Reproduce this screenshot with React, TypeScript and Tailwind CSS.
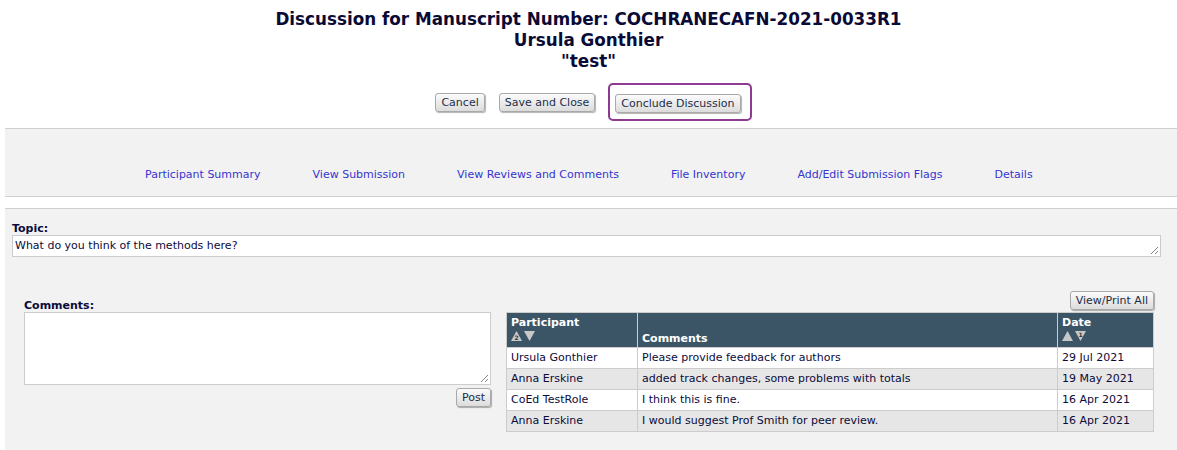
const font = "font-['DejaVu_Sans','Liberation_Sans',sans-serif]";

function Btn({ children }: { children: React.ReactNode }) {
  return (
    <button className="h-[19px] rounded-[3px] border border-[#a9a9a9] bg-gradient-to-b from-[#fbfbfb] to-[#dcdcdc] px-[5px] text-[11px] leading-none text-[#1b2d4a] shadow-[1px_1px_1px_rgba(0,0,0,0.3)]">
      {children}
    </button>
  );
}

function Grip() {
  return (
    <svg width="8" height="8" viewBox="0 0 8 8" className="absolute bottom-[2px] right-[2px]">
      <line x1="1" y1="8" x2="8" y2="1" stroke="#777" strokeWidth="0.9" />
      <line x1="5" y1="8" x2="8" y2="5" stroke="#777" strokeWidth="0.9" />
    </svg>
  );
}

function SortArrows({ up, down }: { up?: string; down?: string }) {
  return (
    <svg width="24" height="11" viewBox="0 0 24 11" className="mt-[2px]">
      <polygon points="0,10 5.5,0 11,10" fill="#c8c8c8" />
      {up && (
        <text x="5.5" y="9" fontSize="6" textAnchor="middle" fill="#333" fontWeight="bold" fontFamily="DejaVu Sans">{up}</text>
      )}
      <polygon points="13,0 24,0 18.5,10" fill="#c8c8c8" />
      {down && (
        <text x="18.5" y="6" fontSize="6" textAnchor="middle" fill="#333" fontWeight="bold" fontFamily="DejaVu Sans">{down}</text>
      )}
    </svg>
  );
}

const rows = [
  ['Ursula Gonthier', 'Please provide feedback for authors', '29 Jul 2021'],
  ['Anna Erskine', 'added track changes, some problems with totals', '19 May 2021'],
  ['CoEd TestRole', 'I think this is fine.', '16 Apr 2021'],
  ['Anna Erskine', 'I would suggest Prof Smith for peer review.', '16 Apr 2021'],
];

const links = [
  'Participant Summary',
  'View Submission',
  'View Reviews and Comments',
  'File Inventory',
  'Add/Edit Submission Flags',
  'Details',
];

export default function App() {
  return (
    <div className={`min-h-[450px] bg-white ${font} text-[11px] text-[#0b0b3b]`}>
      {/* Title */}
      <div className="pt-[9px] text-center text-[16.8px] font-bold leading-[21px] text-[#0a0a36]">
        <div>Discussion for Manuscript Number: COCHRANECAFN-2021-0033R1</div>
        <div>Ursula Gonthier</div>
        <div>"test"</div>
      </div>

      {/* Actions */}
      <div className="mt-[11px] flex items-center justify-center pl-[10px]">
        <Btn>Cancel</Btn>
        <div className="ml-[14px]">
          <Btn>Save and Close</Btn>
        </div>
        <div className="ml-[13px] rounded-[5px] border-2 border-[#8e3a92] pb-[6px] pl-[5px] pr-[9px] pt-[9px]">
          <Btn>Conclude Discussion</Btn>
        </div>
      </div>

      {/* Nav */}
      <div className="ml-[5px] mt-[7px] h-[69px] border-y border-[#cfcfcf] bg-[#f2f2f2]">
        <div className="flex gap-[52px] pl-[140px] pt-[38px] text-[#3535d0]">
          {links.map((l) => (
            <span key={l}>{l}</span>
          ))}
        </div>
      </div>

      {/* Main panel */}
      <div className="ml-[5px] mt-[11px] min-h-[242px] border-t border-[#cfcfcf] bg-[#f2f2f2] pb-[18px]">
        <div className="pl-[7px] pr-[16px] pt-[14px]">
          <div className="font-bold leading-[12px]">Topic:</div>
          <div className="relative h-[22px] border border-[#cccccc] bg-white px-[2px] pt-[3px] leading-[14px]">
            What do you think of the methods here?
            <Grip />
          </div>
        </div>

        <div className="mt-[34px] flex">
          {/* Comments form */}
          <div className="ml-[19px] w-[467px] pt-[8px]">
            <div className="font-bold leading-[13px]">Comments:</div>
            <div className="relative h-[73px] border border-[#cccccc] bg-white">
              <Grip />
            </div>
            <div className="mt-[3px] flex justify-end">
              <Btn>Post</Btn>
            </div>
          </div>

          {/* Table */}
          <div className="ml-[15px] w-[648px]">
            <div className="flex justify-end">
              <Btn>View/Print All</Btn>
            </div>
            <div className="mt-[2px] border border-[#cccccc]">
              <div className="flex h-[34px] bg-[#3b5567] font-bold text-white">
                <div className="w-[130px] px-[4px] pt-[3px] leading-[13px]">
                  Participant
                  <SortArrows up="2" />
                </div>
                <div className="flex flex-1 items-end border-l border-[#cccccc] px-[4px] pb-[2px] leading-[13px]">
                  Comments
                </div>
                <div className="w-[96px] border-l border-[#cccccc] px-[4px] pt-[3px] leading-[13px]">
                  Date
                  <SortArrows down="1" />
                </div>
              </div>
              {rows.map((r, i) => (
                <div
                  key={i}
                  className={`flex h-[21px] items-center border-t border-[#cccccc] ${i % 2 ? 'bg-[#e6e6e6]' : 'bg-white'}`}
                >
                  <div className="flex h-full w-[130px] items-center px-[4px]">{r[0]}</div>
                  <div className="flex h-full flex-1 items-center border-l border-[#cccccc] px-[4px]">{r[1]}</div>
                  <div className="flex h-full w-[96px] items-center border-l border-[#cccccc] px-[4px]">{r[2]}</div>
                </div>
              ))}
            </div>
          </div>
        </div>
      </div>
    </div>
  );
}
